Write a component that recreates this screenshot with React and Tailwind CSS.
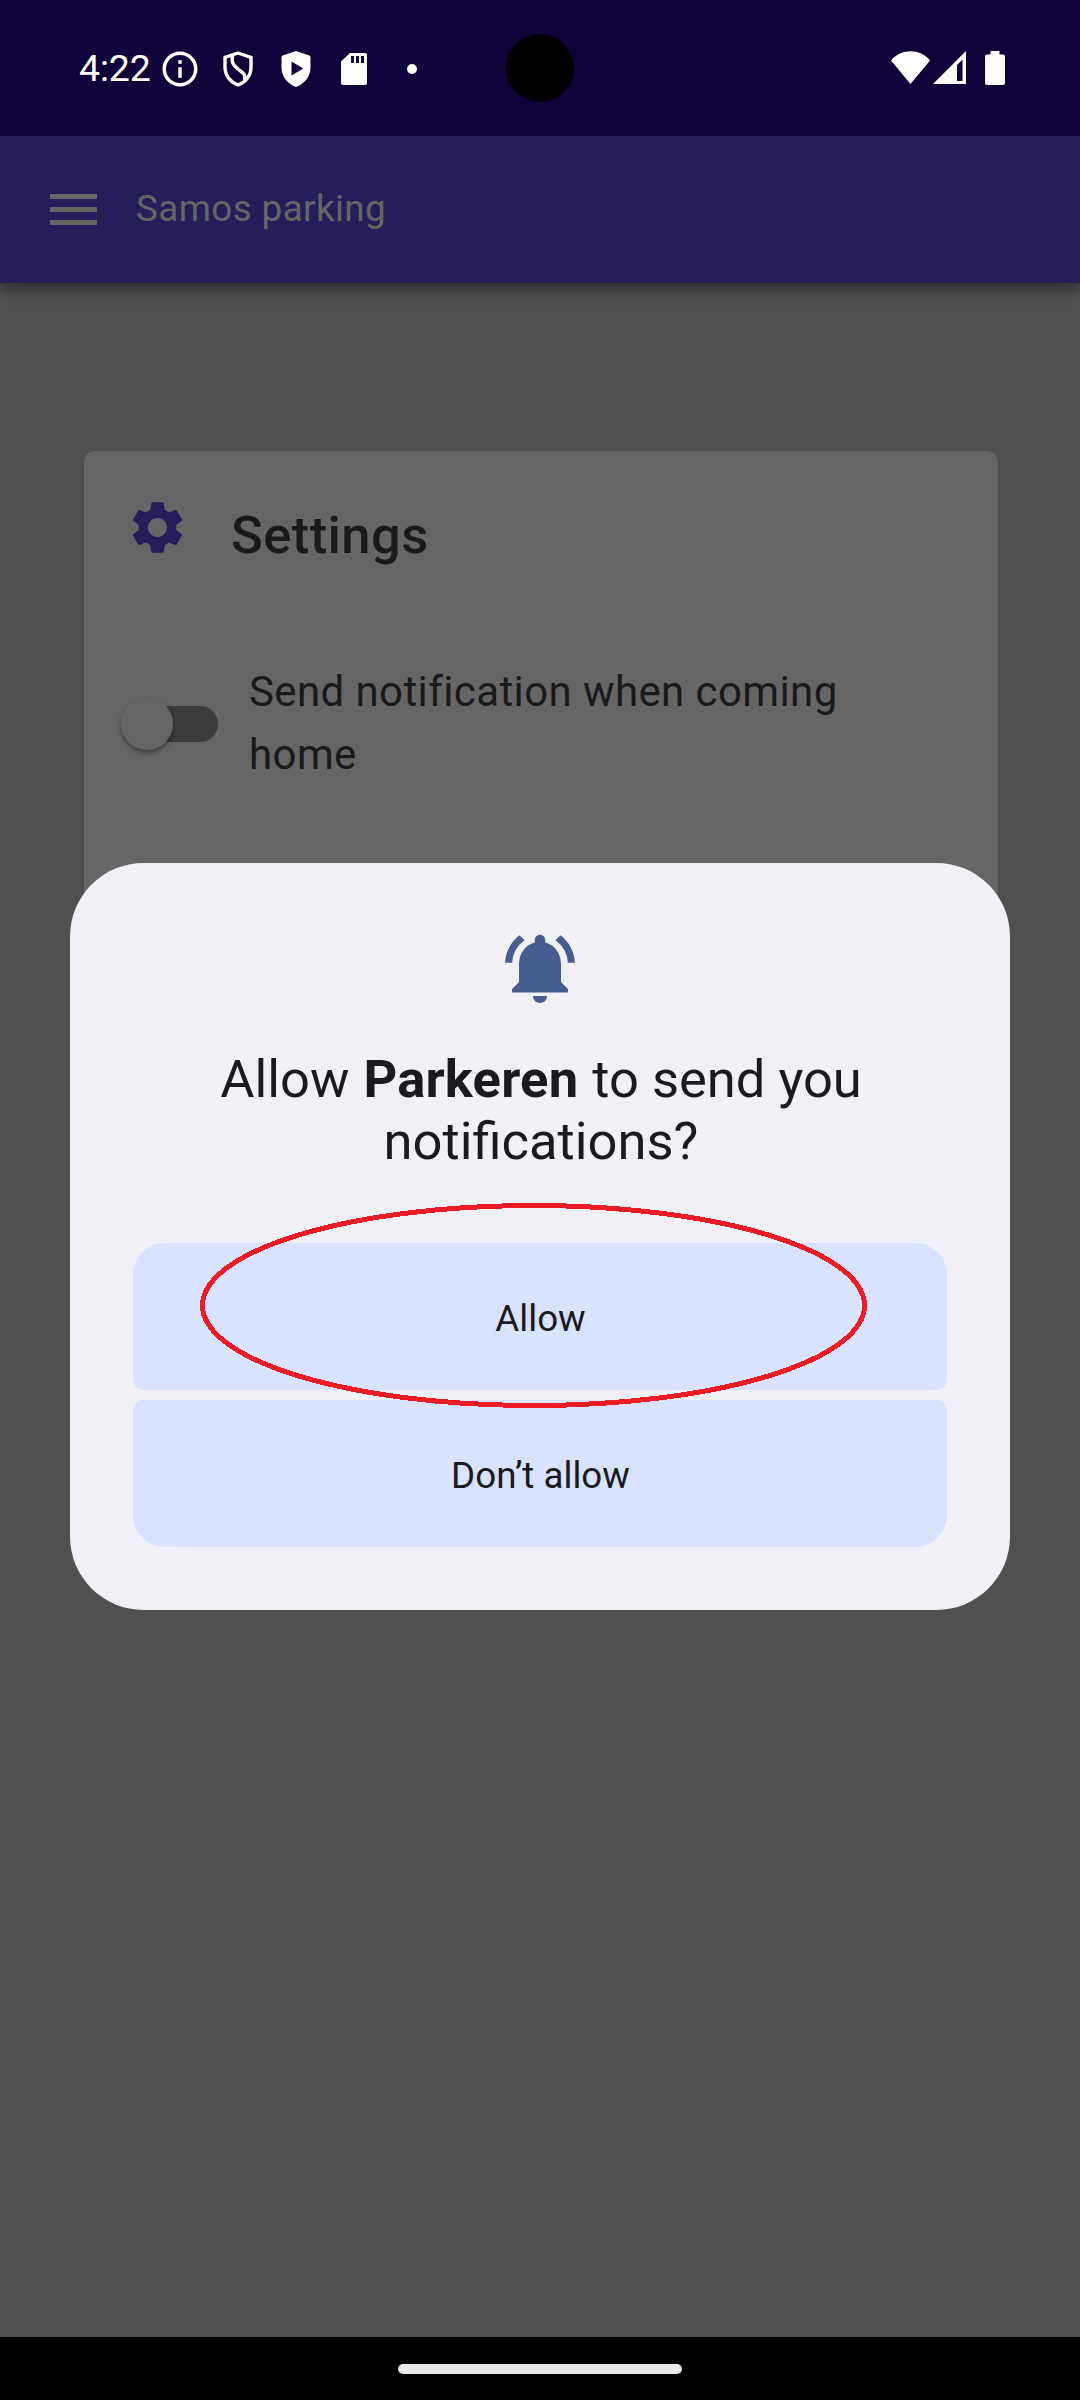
import { MdSettings, MdNotificationsActive, MdInfoOutline } from "react-icons/md";

function StatusBar() {
  return (
    <header className="relative z-10 flex h-[136px] shrink-0 items-center bg-[#10023a] text-white">
      <div className="flex items-center pt-[2px]">
        <span className="ml-[79px] w-[80px] pb-[2px] text-[37.5px] leading-[44px] tracking-[-0.2px]">4:22</span>
        <MdInfoOutline className="h-[42px] w-[42px]" />
        <svg className="ml-[22px] h-[36px] w-[30px]" viewBox="0 0 30 36" fill="none" stroke="currentColor" strokeWidth="3.4">
          <path d="M15 2 L28 6.3 V16 C28 25 22 31.5 15 34 C8 31.5 2 25 2 16 V6.3 Z" strokeLinejoin="round" />
          <path d="M9.5 4.5 C8 12 11 14.5 15 18 C20 22 23 23 21.5 29" />
        </svg>
        <svg className="ml-[28px] h-[36px] w-[30px]" viewBox="0 0 30 36" fill="currentColor">
          <path fillRule="evenodd" d="M15 0 L28.3 4.5 Q29.5 5 29.5 6.5 V16.5 C29.5 26 23 33 15 36 C7 33 .5 26 .5 16.5 V6.5 Q.5 5 1.7 4.5 Z M10.5 10.5 V24.5 L22.3 17.5 Z" />
        </svg>
        <svg className="ml-[30px] h-[32px] w-[26px]" viewBox="0 0 26 32" fill="currentColor">
          <path fillRule="evenodd" d="M9 0 H24 Q26 0 26 2 V30 Q26 32 24 32 H2 Q0 32 0 30 V8.5 Z M10 3 V10 H13 V3 Z M15 3 V10 H18 V3 Z M20 3 V10 H23 V3 Z" />
        </svg>
        <span className="ml-[40px] h-[10px] w-[10px] rounded-full bg-white" />
      </div>
      <span className="absolute left-[506px] top-[34px] h-[68px] w-[68px] rounded-full bg-black" />
      <div className="ml-auto mr-[75px] flex items-center">
        <svg className="h-[34px] w-[39px]" viewBox="0 0 39 34" fill="currentColor">
          <path d="M0 9.5 C10 -2.7 29 -2.7 39 9.5 L19.5 33 Z" />
        </svg>
        <svg className="ml-[3px] h-[34px] w-[33px]" viewBox="0 0 33 34" fill="currentColor">
          <path fillRule="evenodd" d="M33 0 V33 H0 Z M24 14 V30 H29.5 V8.5 Z" />
        </svg>
        <svg className="ml-[19px] h-[34px] w-[20px]" viewBox="0 0 20 34" fill="currentColor">
          <path d="M5.5 0 H14.5 V3.5 H18 Q20 3.5 20 5.5 V32 Q20 34 18 34 H2 Q0 34 0 32 V5.5 Q0 3.5 2 3.5 H5.5 Z" />
        </svg>
      </div>
    </header>
  );
}

function AppBar() {
  return (
    <div className="relative flex h-[147px] shrink-0 items-center bg-[#251e5a] shadow-[0_5px_10px_-2px_rgba(0,0,0,0.3),0_10px_13px_0_rgba(0,0,0,0.14),0_3px_26px_0_rgba(0,0,0,0.1)]">
      <div className="ml-[50px] flex w-[47px] flex-col gap-[8px]">
        <span className="h-[5px] bg-[#666666]" />
        <span className="h-[5px] bg-[#666666]" />
        <span className="h-[5px] bg-[#666666]" />
      </div>
      <h1 className="ml-[39px] pb-[2px] text-[36.75px] leading-[53px] tracking-[0.0115em] text-[#666666]">Samos parking</h1>
    </div>
  );
}

function SettingsCard() {
  return (
    <section className="ml-[84px] mt-[168px] h-[700px] w-[914px] rounded-[10.5px] bg-[#666666] shadow-[0_5px_3px_-3px_rgba(0,0,0,0.08),0_3px_3px_0_rgba(0,0,0,0.06),0_3px_8px_0_rgba(0,0,0,0.06)]">
      <div className="flex h-[116px] items-start pt-[45px] pl-[42px]">
        <MdSettings className="h-[63px] w-[63px] text-[#251e5a]" />
        <h2 className="ml-[42px] mt-[7px] text-[52.5px] font-medium leading-[64px] tracking-[0.008em] text-[#1a1a1a]">Settings</h2>
      </div>
      <div className="mt-[93px] flex items-center pl-[37px]">
        <div className="relative mt-[2px] flex h-[53px] w-[98px] items-center pl-[3px]">
          <div className="h-[36px] w-[94px] rounded-full bg-[#3b3c3e]" />
          <div className="absolute left-0 top-0 h-[52px] w-[52px] rounded-full bg-[#666666] shadow-[0_3px_5px_0_rgba(0,0,0,0.4)]" />
        </div>
        <p className="ml-[30px] w-[620px] text-[42px] leading-[63px] tracking-[0.0095em] text-[#1a1a1a]">Send notification when coming home</p>
      </div>
    </section>
  );
}

function PermissionDialog() {
  return (
    <div className="absolute left-[70px] top-[863px] flex h-[747px] w-[940px] flex-col items-center rounded-[73.5px] bg-[#f1f0f6] px-[63px] pt-[63px] text-[#1a1b20]">
      <MdNotificationsActive className="h-[84px] w-[84px] shrink-0 text-[#475d92]" />
      <p className="mt-[38px] w-[700px] pl-[2px] text-center text-[52.5px] leading-[62px]">
        Allow <b className="mx-[1px] font-bold tracking-[0.2px]">Parkeren</b> to send you notifications?
      </p>
      <div className="mt-[71px] flex w-full flex-col gap-[10px] text-[36.75px]">
        <button className="h-[147px] rounded-t-[31.5px] rounded-b-[10.5px] bg-[#d9e2ff] pt-[4px] pl-[1px]">Allow</button>
        <button className="h-[147px] rounded-t-[10.5px] rounded-b-[31.5px] bg-[#d9e2ff] pt-[4px] pl-[1px]">Don’t allow</button>
      </div>
      <svg className="absolute left-[130px] top-[340px] h-[205px] w-[667px]" viewBox="0 0 667 205" fill="none">
        <ellipse cx="333.5" cy="102.5" rx="331" ry="100" stroke="#ed1c24" strokeWidth="5" shapeRendering="crispEdges" />
      </svg>
    </div>
  );
}

export default function App() {
  return (
    <div className="relative flex h-[2400px] w-[1080px] flex-col overflow-hidden bg-[#515151] font-[Roboto,sans-serif]">
      <StatusBar />
      <AppBar />
      <SettingsCard />
      <PermissionDialog />
      <div className="mt-auto flex h-[63px] items-start justify-center bg-black pt-[27px]">
        <span className="h-[10px] w-[284px] rounded-full bg-[#eaeaea]" />
      </div>
    </div>
  );
}
